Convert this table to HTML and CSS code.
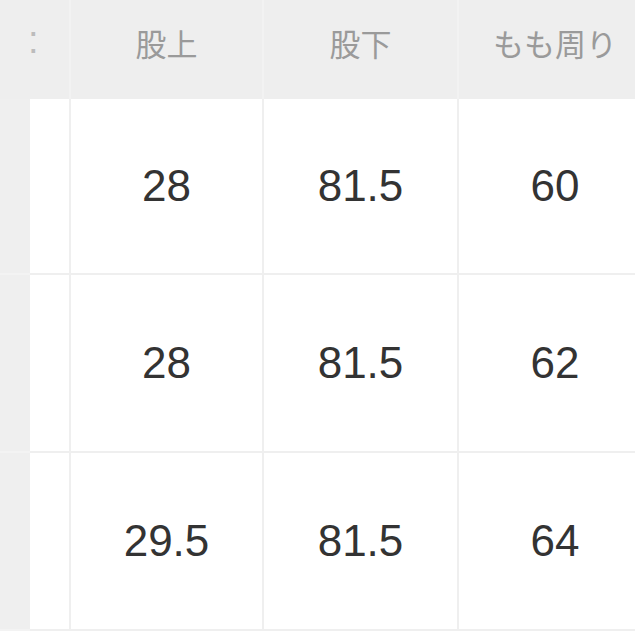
FILE: index.html
```html
<!DOCTYPE html>
<html lang="ja">
<head>
<meta charset="utf-8">
<link rel="stylesheet" href="styles.css">
</head>
<body>
<div class="sheet">
  <div class="grid">
    <div class="cell head strip"></div>
    <div class="cell head narrow"><span class="colon">:</span></div>
    <div class="cell head col"><span class="hd">股上</span></div>
    <div class="cell head col"><span class="hd">股下</span></div>
    <div class="cell head col last"><span class="hd">もも周り</span></div>

    <div class="cell strip row"></div>
    <div class="cell body narrow"></div>
    <div class="cell body"><span class="num">28</span></div>
    <div class="cell body"><span class="num">81.5</span></div>
    <div class="cell body last"><span class="num">60</span></div>

    <div class="cell strip row"></div>
    <div class="cell body narrow"></div>
    <div class="cell body"><span class="num">28</span></div>
    <div class="cell body"><span class="num">81.5</span></div>
    <div class="cell body last"><span class="num">62</span></div>

    <div class="cell strip row"></div>
    <div class="cell body narrow"></div>
    <div class="cell body"><span class="num">29.5</span></div>
    <div class="cell body"><span class="num">81.5</span></div>
    <div class="cell body last"><span class="num">64</span></div>
  </div>
</div>
</body>
</html>
```

FILE: styles.css
```css
* { box-sizing: border-box; }
html, body {
  margin: 0;
  padding: 0;
  background: #ffffff;
}
.sheet {
  width: 635px;
  height: 635px;
  overflow: hidden;
  background: #ffffff;
}
.grid {
  display: grid;
  grid-template-columns: 30px 41px 193px 195px 192px;
  grid-template-rows: 99px 176px 178px 178px;
  width: 651px;
}
.cell {
  display: flex;
  align-items: center;
  justify-content: center;
}
.head {
  background: #eeeeee;
  border-right: 2px solid #f2f2f2;
  align-items: flex-start;
}
.head.strip { border-right: none; }
.head.last { border-right: none; }
.hd {
  font-family: "Noto Sans CJK JP", "Noto Sans", sans-serif;
  font-size: 31px;
  line-height: 1;
  color: #9a9a9a;
  padding-top: 27px;
}
.head.narrow {
  justify-content: flex-start;
}
.colon {
  font-family: "Liberation Sans", Arial, sans-serif;
  font-size: 38px;
  line-height: 1;
  color: #bcbcbc;
  margin-left: -2px;
  padding-top: 21px;
}
.strip.row {
  background: #efefef;
  border-bottom: 2px solid #f3f3f3;
}
.body {
  background: #ffffff;
  border-right: 2px solid #efefef;
  border-bottom: 2px solid #efefef;
}
.body.last { border-right: none; }
.num {
  font-family: "Liberation Sans", Arial, sans-serif;
  font-size: 44px;
  line-height: 1;
  color: #333333;
}
```
